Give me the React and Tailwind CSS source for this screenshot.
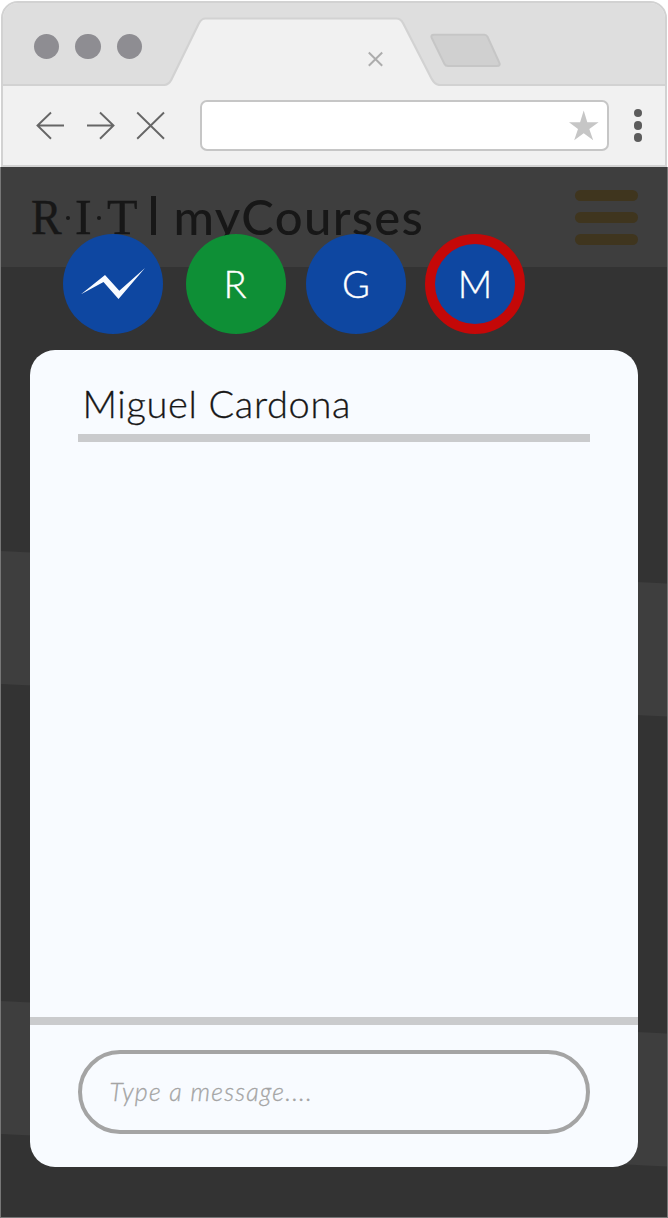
import React from "react";

const LATO = "font-['Lato','Liberation_Sans',sans-serif]";

function TitleBar() {
  return (
    <div className="flex h-[83px] overflow-hidden rounded-t-[15px] bg-[#dedede]">
      <div className="flex w-[160px] items-start gap-4 border-b-2 border-[#d2d2d2] pt-[30.5px] pl-[30.5px]">
        <span className="size-[25.6px] shrink-0 rounded-full bg-[#8e8d92]" />
        <span className="size-[25.6px] shrink-0 rounded-full bg-[#8e8d92]" />
        <span className="size-[25.6px] shrink-0 rounded-full bg-[#8e8d92]" />
      </div>
      <svg className="h-[83px] w-[277px] shrink-0" viewBox="163 3 277 83" fill="none">
        <path
          d="M161 85H163.500Q168.500 85 171.200 80L198.800 23.500Q201.300 18.500 205.500 18.500H396.500Q400.500 18.500 403 23L431.500 78.500Q435 85 440 85V90H161Z"
          fill="#f1f1f1"
          stroke="#d2d2d2"
          strokeWidth="2.2"
        />
        <path d="M368.800 52.500L382.200 65.700M382.200 52.500L368.800 65.700" stroke="#adadad" strokeWidth="2" />
      </svg>
      <div className="flex-1 border-b-2 border-[#d2d2d2]">
        <svg className="-ml-[10px] h-[81px] w-[70px]" viewBox="430 3 70 81" fill="none" overflow="visible">
          <path
            d="M434 34.800H484.500Q486.500 34.800 487.500 36.800L499 62Q501 66 497 66H448Q445.500 66 444.500 64L432 38.500Q430 34.800 434 34.800Z"
            fill="#d0d0d0"
            stroke="#c6c6c6"
            strokeWidth="2"
          />
        </svg>
      </div>
    </div>
  );
}

function Toolbar() {
  return (
    <div className="flex h-[79px] items-start bg-[#f1f1f1] pt-[14px] pl-[31px]">
      <svg className="mt-[9px] h-[33px] w-[136px]" viewBox="34 109 136 33" fill="none" stroke="#666" strokeWidth="1.900">
        <path d="M64 125.500H37.500M51 112.500L37.500 125.500L51 138.700" />
        <path d="M87 125.500H114M100 112.500L113.500 125.500L100 138.700" />
        <path d="M137.200 112.500L164 138.700M164 112.500L137.200 138.700" />
      </svg>
      <div className="ml-[30px] flex h-[51px] w-[409px] items-start justify-end rounded-[7px] border-[2.500px] border-[#c6c6c6] bg-white pt-[8px] pr-[8px]">
        <svg className="h-[31px] w-[31px]" viewBox="568 110 31 31">
          <path d="M583.700 110.500L587.300 122.200H598.600L589.300 129.100L593.200 140.300L583.700 133.300L574.200 140.300L578 129.100L569 122.200H580.100Z" fill="#c6c6c6" />
        </svg>
      </div>
      <div className="mt-[8.500px] ml-[24.500px] flex flex-col gap-[3.700px]">
        <span className="size-[8.800px] rounded-full bg-[#5c5c5c]" />
        <span className="size-[8.800px] rounded-full bg-[#5c5c5c]" />
        <span className="size-[8.800px] rounded-full bg-[#5c5c5c]" />
      </div>
    </div>
  );
}

function SiteBackdrop() {
  return (
    <div className="col-start-1 row-start-1 h-[1050px] overflow-hidden bg-[#333]">
      <header className="flex h-[100px] items-start bg-[#3e3e3e] pl-[29.500px] text-[#171717]">
        <div className="mt-[20px] flex w-[107px] justify-between font-['Liberation_Serif',serif] text-[50px] leading-[60px] [-webkit-text-stroke:0.4px_#171717]">
          <span className="w-[29px] origin-left scale-x-[0.92]">R</span>
          <span className="mt-[29px] size-[4px] rounded-full bg-[#171717]" />
          <span className="-mx-px">I</span>
          <span className="mt-[29px] size-[4px] rounded-full bg-[#171717]" />
          <span>T</span>
        </div>
        <span className="mt-[29px] ml-[13.500px] h-[39px] w-[4.500px] bg-[#171717]" />
        <h1 className={`${LATO} mt-[19px] ml-[18px] text-[49px] leading-[60px] font-medium tracking-[1.300px]`}>myCourses</h1>
        <div className="mt-[23px] mr-[29px] ml-auto flex flex-col gap-[11px]">
          <span className="h-[11px] w-[63px] rounded-full bg-[#3f351e]" />
          <span className="h-[11px] w-[63px] rounded-full bg-[#3f351e]" />
          <span className="h-[11px] w-[63px] rounded-full bg-[#3f351e]" />
        </div>
      </header>
      <div className="mt-[284px] h-[133px] origin-top-left skew-y-[2.800deg] bg-[#3e3e3e]" />
      <div className="mt-[317px] h-[133px] origin-top-left skew-y-[2.800deg] bg-[#3e3e3e]" />
    </div>
  );
}

function ChatHeads() {
  const head = `${LATO} flex size-[100px] shrink-0 items-center justify-center rounded-full text-[38px] leading-none font-light text-white [-webkit-text-stroke:0.4px_#fff]`;
  return (
    <nav className="flex pl-[63px]">
      <button className={`${head} bg-[#0e47a1]`}>
        <svg className="size-[100px]" viewBox="63 234 100 100">
          <path d="M81 294.300L105 275L119.300 290.700L145 268L118.500 299L103.500 282Z" fill="#f8fbff" />
        </svg>
      </button>
      <button className={`${head} ml-[23px] bg-[#0e8f36] pr-[2px] pb-[2px]`}>R</button>
      <button className={`${head} ml-[20px] bg-[#0e47a1] pb-[2px]`}>G</button>
      <button className={`${head} ml-[19px] border-[10.500px] border-[#c40808] bg-[#0e47a1] pb-[2px]`}>M</button>
    </nav>
  );
}

function ChatCard() {
  return (
    <section className={`${LATO} mt-[16px] ml-[29.500px] flex h-[817px] w-[608.500px] flex-col rounded-[25px] bg-[#f8fbff]`}>
      <h2 className="mr-[48px] ml-[48px] flex h-[92px] items-start border-b-8 border-[#cacbcd] pt-[30px] pl-[5px] text-[38px] leading-[46px] font-light tracking-[0.650px] text-[#171717] [-webkit-text-stroke:0.3px_#171717]">
        Miguel Cardona
      </h2>
      <div className="flex-1" />
      <footer className="h-[150px] border-t-8 border-[#cacbcd] px-[48px] pt-[25px]">
        <div className="flex h-[84px] w-[512.500px] items-start rounded-full border-[4.500px] border-[#a4a4a4] pt-[22px] pl-[28px] text-[25px] leading-[30px] font-light tracking-[1.200px] text-[#a4a4a4] italic [-webkit-text-stroke:0.3px_#a4a4a4]">
          Type a message....
        </div>
      </footer>
    </section>
  );
}

export default function App() {
  return (
    <div className="h-[1218px] w-[668px] overflow-hidden bg-white">
      <div className="mt-px h-[166px] px-px">
        <div className="h-[166px] rounded-t-[17px] border-2 border-[#d2d2d2] bg-[#f1f1f1]">
          <TitleBar />
          <Toolbar />
        </div>
      </div>
      <div className="grid h-[1051px] grid-cols-1 border-x border-b border-[#777]">
        <SiteBackdrop />
        <main className="z-10 col-start-1 row-start-1 -ml-px pt-[67px]">
          <ChatHeads />
          <ChatCard />
        </main>
      </div>
    </div>
  );
}
